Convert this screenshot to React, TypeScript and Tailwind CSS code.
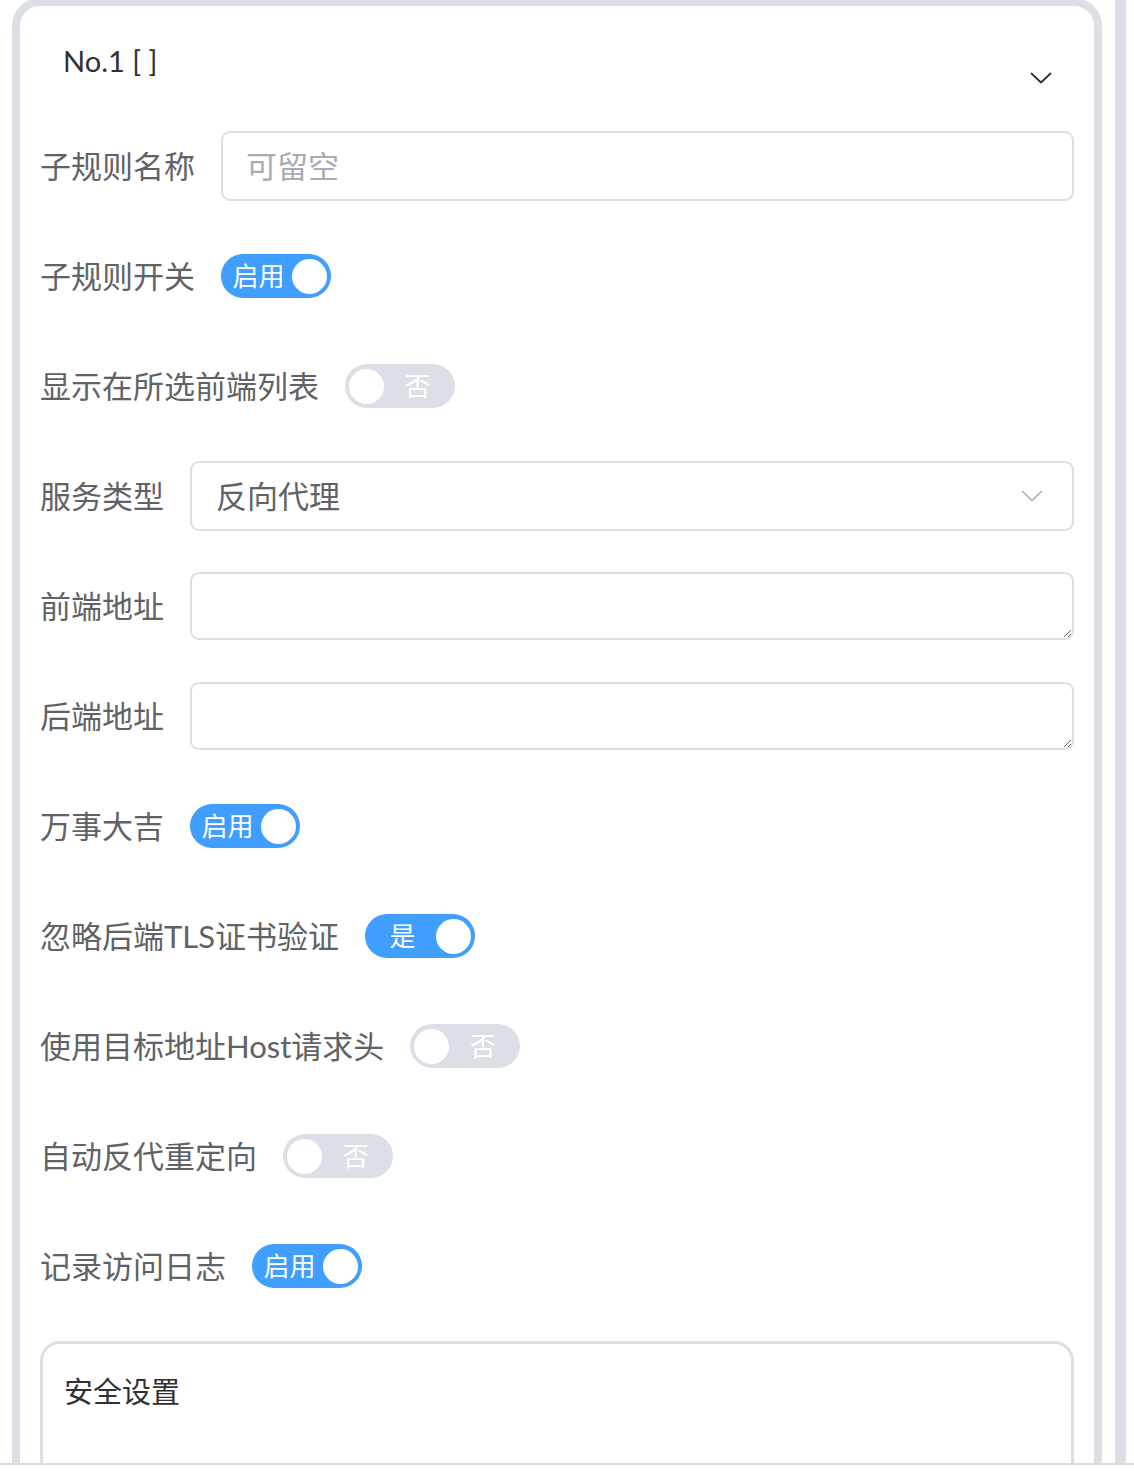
import { ReactNode } from "react";

const font = { fontFamily: 'Lato, "Noto Sans CJK SC", "Noto Sans", sans-serif' };

function Toggle({ on, text }: { on: boolean; text: string }) {
  return (
    <div
      className={`flex items-center w-[110px] h-[44px] rounded-full shrink-0 ${
        on ? "bg-[#409eff]" : "bg-[#dcdfe6]"
      }`}
    >
      {!on && <span className="ml-[4px] w-[35px] h-[35px] rounded-full bg-white" />}
      <span className={`flex-1 text-center text-white text-[26px] leading-none ${on ? "pl-[4px]" : "pr-[4px]"}`}>
        {text}
      </span>
      {on && <span className="mr-[4px] w-[35px] h-[35px] rounded-full bg-white" />}
    </div>
  );
}

function Row({ label, children, grow }: { label: string; children: ReactNode; grow?: boolean }) {
  return (
    <div className="flex items-center h-[70px] mb-[40px]">
      <label className="text-[31px] text-[#606266] pr-[26px] whitespace-nowrap leading-none">{label}</label>
      <div className={grow ? "flex-1 h-full flex items-center" : "flex items-center"}>{children}</div>
    </div>
  );
}

function Chevron({ className, color, w }: { className?: string; color: string; w: number }) {
  return (
    <svg className={className} width="22" height="12" viewBox="0 0 22 12" fill="none">
      <path d="M1.5 1.5 L11 10.5 L20.5 1.5" stroke={color} strokeWidth={w} strokeLinecap="round" strokeLinejoin="round" />
    </svg>
  );
}

export default function App() {
  return (
    <div className="w-[1134px] h-[1480px] bg-white overflow-hidden" style={font}>
      <div className="h-[1463px] flex overflow-hidden">
        {/* rule card */}
        <div className="ml-[12px] mt-[-2px] w-[1090px] h-[1600px] shrink-0 border-[8px] border-[#dcdfe6] rounded-[28px]">
          <div className="h-[125px] flex justify-between pl-[43px] pr-[42px]">
            <div className="pt-[33px] text-[29px] leading-[44px] text-[#303133]">No.1 [ ]</div>
            <Chevron className="mt-[66px]" color="#303133" w={1.8} />
          </div>

          <div className="px-[20px]">
            <Row label="子规则名称" grow>
              <input
                placeholder="可留空"
                className="w-full h-[70px] border-2 border-[#dcdfe6] rounded-[9px] px-[23px] text-[31px] text-[#606266] placeholder:text-[#a8abb2] outline-none"
              />
            </Row>
            <Row label="子规则开关">
              <Toggle on text="启用" />
            </Row>
            <Row label="显示在所选前端列表">
              <Toggle on={false} text="否" />
            </Row>
            <Row label="服务类型" grow>
              <div className="w-full h-[70px] border-2 border-[#dcdfe6] rounded-[9px] pl-[24px] pr-[29px] flex items-center justify-between">
                <span className="text-[31px] text-[#606266] leading-none">反向代理</span>
                <Chevron color="#a8abb2" w={1.6} />
              </div>
            </Row>
            <Row label="前端地址" grow>
              <textarea className="w-full h-[68px] border-2 border-[#dcdfe6] rounded-[9px] px-[24px] py-[10px] text-[31px] outline-none resize-y" />
            </Row>
            <Row label="后端地址" grow>
              <textarea className="w-full h-[68px] border-2 border-[#dcdfe6] rounded-[9px] px-[24px] py-[10px] text-[31px] outline-none resize-y" />
            </Row>
            <Row label="万事大吉">
              <Toggle on text="启用" />
            </Row>
            <Row label="忽略后端TLS证书验证">
              <Toggle on text="是" />
            </Row>
            <Row label="使用目标地址Host请求头">
              <Toggle on={false} text="否" />
            </Row>
            <Row label="自动反代重定向">
              <Toggle on={false} text="否" />
            </Row>
            <Row label="记录访问日志">
              <Toggle on text="启用" />
            </Row>

            <div className="border-[3px] border-[#dcdfe6] rounded-[20px] h-[400px] pl-[21px] pt-[26px]">
              <div className="text-[29px] leading-[44px] text-[#303133]">安全设置</div>
            </div>
          </div>
        </div>
        <div className="ml-[13px] w-[11px] shrink-0 bg-[#dcdfe6]" />
      </div>
      <div className="h-[2px] bg-[#dcdcdc]" />
    </div>
  );
}
